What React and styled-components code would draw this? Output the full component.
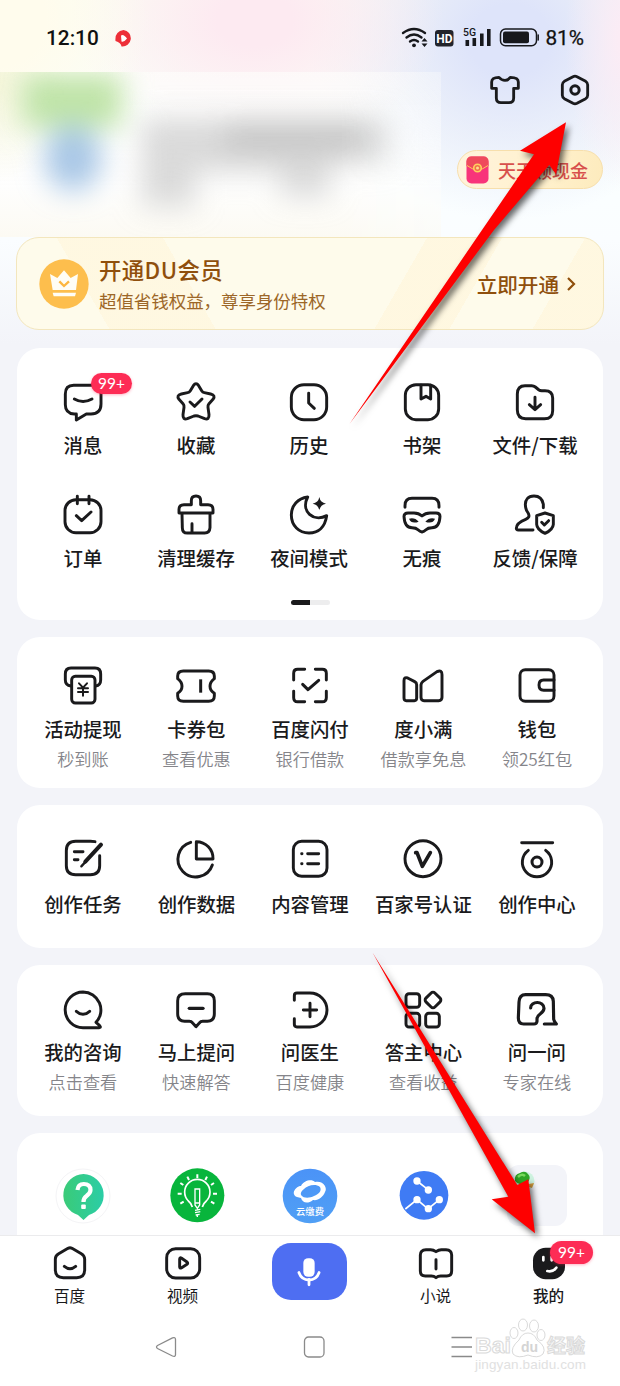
import React from 'react'
import styled, { createGlobalStyle, css } from 'styled-components'

const ink = '#1a1a1c';
const brown = '#8f4f0c';

const GlobalStyle = createGlobalStyle`
  body{
    margin: 0;
    background: #f3f4f9;
    font-family: "Noto Sans CJK SC", sans-serif;
    color: ${ink};
  }
  *{
    box-sizing: border-box;
  }
`;

const Page = styled.div`
  position: relative;
  width: 620px;
  height: 1386px;
  overflow: hidden;
`;
const Content = styled.main`
  height: 1235px;
  overflow: hidden;
  background:
    radial-gradient(ellipse 150px 150px at 0 20px, #fffced 30%, rgba(255,252,237,0) 100%),
    radial-gradient(ellipse 190px 130px at 255px 20px, #fdeaf1 20%, rgba(253,234,241,0) 100%),
    radial-gradient(ellipse 60px 150px at 625px 40px, #fbecf5 10%, rgba(251,236,245,0) 100%),
    radial-gradient(ellipse 200px 180px at 510px 40px, #dee4fa 20%, rgba(222,228,250,0) 100%),
    linear-gradient(#fbfdf4 0, #fafeff 200px, #fafdff 240px, #f3f4f9 345px);
`;

/* status bar */
const StatusBar = styled.div`
  display: flex;
  align-items: center;
  height: 72px;
  padding: 4px 36px 0 46px;
  font: 500 20.8px/24px Roboto, sans-serif;
  color: #111;
`;
const Recording = styled.svg`
  margin: 0 auto 0 16px;
`;
const Signals = styled.svg`
  margin-right: 6px;
`;
const Percent = styled.span`
  font-weight: 400;
  -webkit-text-stroke: .25px #111;
`;

/* profile header */
const Header = styled.header`
  display: flex;
  height: 165px;
`;
const BlurredProfile = styled.div`
  width: 441px;
  overflow: hidden;
  background:
    radial-gradient(ellipse 70px 100px at 0 10px, rgba(244,244,214,.85), rgba(250,250,235,0)),
    linear-gradient(rgba(253,253,251,.6), rgba(254,254,254,.85) 40%, #fefefd 70%, #fcfaf3);
  mask-image: linear-gradient(90deg, #000 340px, rgba(0,0,0,.55));
`;
const HeaderSide = styled.div`
  flex: 1;
  display: flex;
  flex-direction: column;
  align-items: flex-end;
  padding-right: 17px;
`;
const Tools = styled.div`
  display: flex;
  gap: 38px;
  padding: 2px 12px 0 0;
  margin-bottom: 44px;
`;
const CashPill = styled.div`
  display: flex;
  align-items: center;
  gap: 9px;
  width: 146px;
  height: 39px;
  padding-left: 8px;
  border: 1.5px solid #f7dfac;
  border-radius: 20px;
  background: linear-gradient(100deg, #fff3dc, #fff1cd 60%, #fdebbd);
  color: #d8504c;
  font-size: 18px;
  font-weight: 500;
  line-height: 24px;
  white-space: nowrap;
`;

/* membership banner */
const Vip = styled.section`
  display: flex;
  align-items: center;
  height: 93px;
  margin: 0 16px 18px;
  padding: 0 26px 0 22px;
  border: 1px solid #f3e6bd;
  border-radius: 23px;
  background:
    linear-gradient(60deg, transparent 0 80px, rgba(255,246,220,.65) 80px 172px, transparent 172px) no-repeat,
    linear-gradient(120deg, transparent 0 355px, rgba(255,246,220,.7) 355px 420px, transparent 420px 492px, rgba(255,246,220,.7) 492px) no-repeat,
    #fefbeb;
`;
const VipText = styled.div`
  flex: 1;
  margin-left: 10px;
  padding-top: 2px;
  color: ${brown};
  white-space: nowrap;
`;
const VipTitle = styled.div`
  font-size: 22.4px;
  line-height: 32px;
  margin-top: -1px;
  letter-spacing: .4px;
  font-weight: 500;
`;
const VipHint = styled.div`
  font-size: 17.45px;
  line-height: 31px;
  font-weight: 400;
  color: #9c6627;
`;
const VipAction = styled.div`
  display: flex;
  align-items: center;
  gap: 6px;
  color: ${brown};
  font-size: 20.6px;
  line-height: 28px;
  font-weight: 500;
`;

/* white cards */
const Card = styled.section`
  height: ${p => p.$height}px;
  margin: 0 17px 17px;
  padding-top: ${p => p.$top}px;
  border-radius: 23px;
  background: #fff;
`;
const Grid = styled.div`
  display: grid;
  grid-template-columns: repeat(5, ${p => p.$col || 113.5}px);
  justify-content: start;
  row-gap: 36px;
  padding-left: ${p => p.$left || 9.2}px;
`;
const Item = styled.div`
  position: relative;
  display: flex;
  flex-direction: column;
  align-items: center;
  white-space: nowrap;
`;
const Label = styled.div`
  margin-top: ${p => p.$gap}px;
  font-size: 19.4px;
  line-height: 24px;
  font-weight: 500;
`;
const Hint = styled.div`
  margin-top: 8px;
  font-size: 17.2px;
  line-height: 20px;
  font-weight: 350;
  color: #85858a;
`;
const Pager = styled.div`
  width: 39px;
  height: 5px;
  margin: 30px auto 0;
  border-radius: 3px;
  background: linear-gradient(90deg, ${ink} 50%, #ededee 50%);
`;
const Badge = styled.span`
  position: absolute;
  left: ${p => p.$x}px;
  top: ${p => p.$y}px;
  width: ${p => (p.$big ? 43 : 41)}px;
  height: ${p => (p.$big ? 23 : 21)}px;
  border-radius: 12px;
  background: #fd2c55;
  box-shadow: 0 1px 3px rgba(253,44,85,.35);
  color: #fff;
  font: 400 15.5px/${p => (p.$big ? 22 : 21)}px Lato, sans-serif;
  text-align: center;
`;
const Tile = styled.div`
  width: 60px;
  height: 61px;
  border-radius: 12px;
  background: #f3f4f9;
`;

/* bottom bars */
const TabBar = styled.nav`
  display: grid;
  grid-template-columns: 113px 113px 140px 113px 113px;
  height: 77px;
  padding: 5px 0 0 13px;
  border-top: 1px solid #ebebed;
  background: #fff;
`;
const TabLabel = styled.div`
  margin-top: -1px;
  font-size: 15.6px;
  line-height: 22px;
  font-weight: ${p => (p.$active ? 500 : 400)};
`;
const Mic = styled.div`
  display: flex;
  align-items: center;
  justify-content: center;
  width: 75px;
  height: 57px;
  margin-top: 2px;
  border-radius: 19px;
  background: #4e6ef2;
`;
const SystemBar = styled.div`
  display: flex;
  align-items: flex-start;
  height: 74px;
  padding: 24px 0 0 155px;
  background: #fff;
  svg{
    margin-right: 126px;
  }
`;

const overlay = css`
  position: absolute;
  pointer-events: none;
`;
const Arrows = styled.svg`
  ${overlay}
  inset: 0;
  filter: drop-shadow(3px 4px 3px rgba(0,0,0,.6));
`;
const Watermark = styled.svg`
  ${overlay}
  left: 470px;
  top: 1312px;
`;

// icons are drawn on a 3x canvas around the origin
const Icon = ({ children, w = 8.8 }) => (
  <svg width="44" height="44" viewBox="-66 -66 132 132" fill="none" stroke={ink} strokeWidth={w} strokeLinecap="round" strokeLinejoin="round">
    {children}
  </svg>
)

const dot = { fill: ink, stroke: 'none' };

const icons = {
  message: <><path d="M-28-50H28Q54-50 54-24V6Q54 36 24 36H10L-20 54V36H-26Q-53 34-53 8V-24Q-53-50-28-50Z" /><path d="M-26-9Q0 6 27-9" /></>,
  star: <><path d="M-8-49Q0-60 8-49L17-34Q20-29 25-28L44-24Q60-20 51-8L39 5Q35 10 36 16L39 38Q40 54 26 50L6 42Q0 40-6 42L-26 50Q-40 54-39 38L-36 16Q-35 10-39 5L-51-8Q-60-20-44-24L-25-28Q-20-29-17-34Z" /><path d="M-18 0L-4 13L18-9" /></>,
  history: <><rect x="-53" y="-52" width="106" height="105" rx="38" /><path d="M-1-26V3L16 19" /></>,
  shelf: <><rect x="-50" y="-52" width="100" height="105" rx="32" /><path d="M-3-50V-9L12-17L26-9V-50" /></>,
  folder: <><path d="M-30-49H-10Q-4-49 1-45L12-36Q15-34 20-34H30Q53-34 53-12V26Q53 50 28 50H-28Q-53 50-53 24V-24Q-53-49-30-49Z" /><path d="M0-14V22M-17 8L0 23L17 8" /></>,
  order: <><rect x="-54" y="-46" width="108" height="99" rx="33" /><path d="M-17-56V-34M18-56V-34M-20 2L-4 17L24-9" /></>,
  clean: <><path d="M-14-31V-43Q-14-57 0-57Q14-57 14-43V-31H36Q51-31 51-17V-6H-51V-17Q-51-31-36-31Z" /><path d="M-42-4L-41 38Q-41 54-26 54H26Q41 54 42 38L42-4M-12 50V26" /></>,
  night: <><path d="M-4-54C-34-50-53-28-53 0C-53 32-30 54 0 54C28 54 48 36 53 2C14 22-26-10-4-54Z" /><path {...dot} d="M31-54Q34-37 51-34Q34-31 31-14Q28-31 11-34Q28-37 31-54Z" /></>,
  mask: <><path d="M-51-23V-28Q-51-50-30-50H30Q51-50 51-28V-23" /><path d="M-42-6H-24Q-10-6 0 3Q10-6 24-6H42Q54-6 54 4C53 24 46 38 30 38Q18 38 12 44Q6 50 0 51Q-6 50-12 44Q-18 38-30 38C-46 38-53 24-54 4Q-54-6-42-6Z" /><path {...dot} d="M-39 11Q-22 6-10 20Q-32 28-39 11ZM39 11Q22 6 10 20Q32 28 39 11Z" /></>,
  feedback: <><path d="M25-22V-32C22-50 12-57-3-57C-22-57-29-44-29-32C-29-18-26-12-20-5C-16 4-18 9-28 13C-46 20-56 28-56 40Q-56 45-50 45H-6" /><path d="M30-6L55 2V28Q54 44 30 55Q6 44 5 28V2ZM20 22L28 30L41 17" /></>,
  cash: <><path d="M-36 0Q-53-2-53-18V-36Q-53-54-36-54H36Q53-54 53-36V-18Q53-2 38 0" /><rect x="-34" y="-29" width="70" height="80" rx="11" /><path strokeWidth="6" d="M-12-8L0 5L12-8M0 5V29M-15 7H15M-15 18H15" /></>,
  ticket: <><path d="M-38-45H38Q55-45 55-30V-22Q42-12 42 1Q42 14 55 22V30Q55 46 38 46H-38Q-55 46-55 30V22Q-42 14-42 1Q-42-12-55-22V-30Q-55-45-38-45Z" /><path strokeWidth="9" strokeLinecap="butt" d="M14-20V20" /></>,
  scan: <><path d="M-16-50H-37Q-49-50-49-38V-18M16-50H37Q49-50 49-38V-18M-16 47H-37Q-49 47-49 35V16M16 47H37Q49 47 49 35V16" /><path strokeWidth="9" d="M-22-5L-6 11L26-17" /></>,
  duxiaoman: <><path d="M-57-16Q-57-28-46-24L-25-13Q-19-10-19-4V36Q-19 44-26 44H-50Q-57 44-57 36Z" /><path d="M-6-4Q-5-10 0-14L42-43Q57-50 57-34V34Q57 44 47 44H3Q-6 44-6 34Z" /></>,
  wallet: <><rect x="-51" y="-49" width="102" height="95" rx="16" /><path d="M51-18H20Q6-18 6-3Q6 13 20 13H51" /></>,
  task: <><path d="M36-52Q30-53 22-53H-22Q-50-53-50-25V20Q-50 47-22 47H22Q50 47 50 20V-10" /><path strokeWidth="12" d="M54-43L7 8" /><path strokeWidth="7" d="M8 8L-5 22" /><path d="M-26-22H0M-26 2H-15" /></>,
  pie: <><path d="M-16-50A53 53 0 1 0 49 18" /><path d="M1-52V0H51A50 50 0 0 0 1-52Z" /></>,
  list: <><rect x="-50" y="-53" width="101" height="105" rx="25" /><path d="M-7-16H26M-7 14H26M-25-16H-24M-25 14H-24" /></>,
  verify: <><circle cy="-1" r="54" /><path strokeWidth="11" d="M-22-19H-18L-2 22L22-19" /></>,
  creator: <><path d="M-46-49H47M-26-26A44 44 0 1 0 26-26" /><circle cy="9" r="15" strokeWidth="9" /></>,
  consult: <><path d="M0-54A53.500 53.500 0 0 0 0 53H49Q55 52 50 47L39 37A54 54 0 0 0 0-54Z" /><path d="M-20 4Q0 22 20 4" /></>,
  ask: <><path d="M-32-49H34Q55-49 55-28V12Q55 33 34 34H20Q14 34 10 39L0 50L-10 39Q-14 34-20 34H-34Q-55 33-55 12V-28Q-55-49-32-49Z" /><path strokeWidth="10" d="M-20-5H21" /></>,
  doctor: <><path d="M-47-29V-43Q-47-51-39-51H0A51 51 0 0 1 0 51H-39Q-47 51-47 43V26" /><path d="M-20 0H20M0-20V20" /></>,
  answer: <><rect x="-51" y="-49" width="41" height="41" rx="9" /><rect x="-51" y="10" width="41" height="41" rx="9" /><rect x="8" y="10" width="41" height="41" rx="9" /><rect x="11" y="-49" width="38" height="38" rx="8" transform="rotate(45 30 -30)" /></>,
  question: <path strokeWidth="9.500" d="M-19-6C-20-27 21-29 21-5C20 12 1 10 0 26V34Q-1 42-9 42H-40Q-56 42-56 24L-54-24Q-53-46-34-46H26Q48-46 49-26L50 28Q51 34 58 42H22" />,
};

const first = [
  ['message', '消息'], ['star', '收藏'], ['history', '历史'], ['shelf', '书架'], ['folder', '文件/下载'],
  ['order', '订单'], ['clean', '清理缓存'], ['night', '夜间模式'], ['mask', '无痕'], ['feedback', '反馈/保障'],
];
const money = [
  ['cash', '活动提现', '秒到账'], ['ticket', '卡券包', '查看优惠'], ['scan', '百度闪付', '银行借款'],
  ['duxiaoman', '度小满', '借款享免息'], ['wallet', '钱包', '领25红包'],
];
const create = [
  ['task', '创作任务'], ['pie', '创作数据'], ['list', '内容管理'], ['verify', '百家号认证'], ['creator', '创作中心'],
];
const qa = [
  ['consult', '我的咨询', '点击查看'], ['ask', '马上提问', '快速解答'], ['doctor', '问医生', '百度健康'],
  ['answer', '答主中心', '查看收益'], ['question', '问一问', '专家在线'],
];

const renderItems = (list, gap) => list.map(([icon, label, hint]) => (
  <Item key={label}>
    <Icon>{icons[icon]}</Icon>
    {icon === 'message' && <Badge $x={64.5} $y={-7}>99+</Badge>}
    <Label $gap={gap}>{label}</Label>
    {hint && <Hint>{hint}</Hint>}
  </Item>
))

const StatusIcons = () => (
  <Signals width="138" height="26" viewBox="0 -2 138 26" fill="none" stroke="#17181c" strokeLinecap="round">
    <path strokeWidth="2.300" d="M2 6Q13-2 24 6M5.500 10.500Q13 4.500 20.500 10.500M9 14.500Q13 11.500 17 14.500" />
    <circle cx="13" cy="18.300" r="1.900" fill="#17181c" stroke="none" />
    <path d="M20.500 14.500L23.500 11L26.500 14.500ZM20.500 16.500L23.500 20L26.500 16.500Z" fill="#17181c" stroke="none" />
    <rect x="34" y="3" width="18.500" height="16.500" rx="3" fill="#22242b" stroke="none" />
    <text x="43.300" y="15.800" textAnchor="middle" fontFamily="Roboto" fontWeight="700" fontSize="12" fill="#fff" stroke="none">HD</text>
    <text x="62" y="9" fontFamily="Roboto" fontWeight="500" fontSize="11.500" textLength="13" lengthAdjust="spacingAndGlyphs" fill="#17181c" stroke="none">5G</text>
    <path strokeWidth="3.600" strokeLinecap="butt" d="M66.300 13V19M73.300 11V19M80.800 6.500V19M87.800 2V19" />
    <rect x="99.500" y="2" width="36" height="16.800" rx="5" strokeWidth="1.500" />
    <rect x="102" y="4.500" width="26" height="11.800" rx="2" fill="#17181c" stroke="none" />
    <path strokeWidth="1.500" d="M137.200 8V13" />
  </Signals>
)

const tabs = {
  home: <><path d="M-6-44Q0-47 6-44L34-28Q44-22 44-12V20Q44 44 20 44H-20Q-44 44-44 20V-12Q-44-22-34-28Z" /><path d="M-17 10Q0 24 17 10" /></>,
  video: <><rect x="-49" y="-43" width="99" height="88" rx="27" /><path d="M-10-12Q-10-18-4-14L12-3Q16 1 12 4L-4 14Q-10 17-10 12Z" /></>,
  novel: <><path d="M0-34Q-8-40-16-40H-30Q-47-39-47-24V24Q-47 39-32 39H-14Q-6 39 0 44Q6 39 14 39H32Q47 39 47 24V-24Q47-39 30-40H16Q8-40 0-34Z" /><path d="M0-10V18" /></>,
  mine: <><rect x="-48" y="-46" width="96" height="95" rx="38" {...dot} /><path stroke="#fff" strokeWidth="8" d="M-17-18V-8M8-18V-8M-5 24Q12 28 22 14" /></>,
};

const App = () => {
  return (
    <Page>
      <GlobalStyle />
      <Content>
        <StatusBar>
          12:10
          <Recording width="17" height="17" viewBox="0 0 17 17">
            <path d="M8.500 0A8.300 8.300 0 1 1 6.500 16.500Q6 12.500.5 11Q-.5 1.500 8.500 0Z" fill="#ed2f38" />
            <path d="M6 5.500Q8.500 3.500 12 8.500Q9 12.500 6.500 11.500Z" fill="#fff" />
          </Recording>
          <StatusIcons />
          <Percent>81%</Percent>
        </StatusBar>
        <Header>
          <BlurredProfile>
            <svg width="441" height="165" viewBox="0 0 441 165">
              <defs>
                <filter id="soft" x="-100%" y="-100%" width="300%" height="300%"><feGaussianBlur stdDeviation="14" /></filter>
              </defs>
              <g filter="url(#soft)">
                <rect x="22" y="2" width="100" height="54" fill="#c0e4a8" />
                <ellipse cx="73" cy="86" rx="29" ry="33" fill="#a9c7e6" />
                <path d="M142 46H390V92H330V124H280V100H195V134H142Z" fill="#cccccc" opacity=".72" />
                <rect x="225" y="50" width="145" height="30" fill="#b6b6b6" opacity=".5" />
              </g>
            </svg>
          </BlurredProfile>
          <HeaderSide>
            <Tools>
              <svg width="32" height="32" viewBox="-48 -48 96 96" fill="none" stroke={ink} strokeWidth="8.500" strokeLinejoin="round">
                <path d="M-18-38Q-10-29 0-29Q10-29 16-38Q40-38 40-24V-5H26V24Q26 38 12 38H-12Q-26 38-26 24V-5H-40V-24Q-40-38-18-38Z" />
              </svg>
              <svg width="32" height="32" viewBox="-48 -48 96 96" fill="none" stroke={ink} strokeWidth="8.500" strokeLinejoin="round">
                <path d="M-6-40Q0-43 6-40L32-26Q38-22 38-16V16Q38 22 32 26L6 40Q0 43-6 40L-32 26Q-38 22-38 16V-16Q-38-22-32-26Z" />
                <circle r="12.500" strokeWidth="9" />
              </svg>
            </Tools>
            <CashPill>
              <svg width="23" height="28" viewBox="0 0 23 28">
                <rect x=".5" y=".5" width="22" height="27" rx="5" fill="#f8347a" />
                <path d="M.5 10V6Q.5.5 5.500.5H17.500Q22.500.5 22.500 6V10Q11.500 18 .5 10Z" fill="#ef4a5c" />
                <path d="M1 9.500Q11.500 18 22 9.500" fill="none" stroke="#ffc35c" />
                <circle cx="11.500" cy="12" r="3.800" fill="#f0714a" stroke="#ffd060" strokeWidth="1.600" />
                <circle cx="11.500" cy="12" r="1.500" fill="#ffe08a" />
              </svg>
              天天领现金
            </CashPill>
          </HeaderSide>
        </Header>

        <Vip>
          <svg width="50" height="50" viewBox="-75 -75 150 150">
            <circle r="74" fill="#fdbe4d" />
            <path d="M-42-30L-20-18L0-41L20-18L42-30L36 18H-34Z" fill="#fffdf6" />
            <path d="M-34 26H36L33 37H-31Z" fill="#fffdf6" />
            <path d="M-14-8L0 6L15-8" fill="none" stroke="#fdb640" strokeWidth="7" />
          </svg>
          <VipText>
            <VipTitle>开通DU会员</VipTitle>
            <VipHint>超值省钱权益，尊享身份特权</VipHint>
          </VipText>
          <VipAction>
            立即开通
            <svg width="12" height="16" viewBox="0 0 12 16" fill="none" stroke={brown} strokeWidth="2.200"><path d="M3 2L9 8L3 14" /></svg>
          </VipAction>
        </Vip>

        <Card $height={272} $top={32}>
          <Grid $col={113} $left={9.5}>{renderItems(first, 9)}</Grid>
          <Pager />
        </Card>
        <Card $height={151} $top={27}>
          <Grid>{renderItems(money, 9)}</Grid>
        </Card>
        <Card $height={143} $top={32}>
          <Grid>{renderItems(create, 11)}</Grid>
        </Card>
        <Card $height={151} $top={23}>
          <Grid>{renderItems(qa, 8)}</Grid>
        </Card>
        <Card $height={140} $top={32}>
          <Grid $left={9.5}>
            <Item>
              <svg width="60" height="61" viewBox="-30 -30 60 61">
                <defs>
                  <linearGradient id="mint"><stop stopColor="#3acb78" /><stop offset="1" stopColor="#2bcda6" /></linearGradient>
                </defs>
                <circle r="27" cy="1" fill="#fff" stroke="#f4f4f6" />
                <path d="M.5-21A21 21 0 0 1 6 20L.5 25L-5 20A21 21 0 0 1 .5-21Z" fill="url(#mint)" />
                <path d="M-5.500-5Q-5-11 .8-11Q7.500-11 7.500-5Q7.500-2 3.500 1Q.5 3 .5 7" fill="none" stroke="#fff" strokeWidth="4.200" />
                <rect x="-1.800" y="9.500" width="4.600" height="4.400" rx="1" fill="#fff" />
              </svg>
            </Item>
            <Item>
              <svg width="60" height="61" viewBox="-90 -90 180 183" fill="none" stroke="#fff" strokeWidth="5">
                <circle r="81" cy="1" cx="1" fill="#08b53c" stroke="none" />
                <path d="M-14 36Q-16 26-26 18A38 38 0 1 1 28 18Q18 26 16 36" />
                <path strokeWidth="4" d="M-6 30V-18H8V30L1 40ZM-6 24H8M-6 46L10 43M-6 53L10 50M-4 60L8 58M1 60V66" />
                <path strokeWidth="6" d="M1-62V-51M-29-55L-24-45M30-55L25-45M-50-36L-41-30M51-36L42-30M-58-4H-46M60-4H48M-50 26L-40 20M52 26L42 20" />
              </svg>
            </Item>
            <Item>
              <svg width="60" height="61" viewBox="-30 -30 60 61">
                <defs>
                  <linearGradient id="sky" x1="0" y1="0" x2="0" y2="1"><stop stopColor="#4b93f7" /><stop offset="1" stopColor="#509ff5" /></linearGradient>
                </defs>
                <circle r="27.300" cy="1" fill="url(#sky)" />
                <path d="M-13 2C-20-1-14-9-9-9C-6-15 2-16 5-13C13-15 18-7 15-3C13 2 8 6 3 5C-3 10-8 7-9 3ZM-9 0C-6 4 0 3 4 1C9-1 12-4 10-8C5-12-3-9-6-6Q-10-3-9 0Z" fill="#fff" fillRule="evenodd" />
                <text y="19.500" textAnchor="middle" fontSize="9.300" fontWeight="500" fill="#fff">云缴费</text>
              </svg>
            </Item>
            <Item>
              <svg width="60" height="61" viewBox="-90 -90 180 183" fill="none" stroke="#fff" strokeWidth="5">
                <circle r="73" cy="1" fill="#3f7bf4" stroke="none" />
                <path d="M-21-42L12-16M-56 42L-21 14L12 42L46 14" />
                <g fill="#fff" stroke="none"><circle cx="-21" cy="-42" r="11" /><circle cx="13" cy="-15" r="11" /><circle cx="-21" cy="14" r="11" /><circle cx="13" cy="41" r="11" /><circle cx="46" cy="14" r="11" /></g>
              </svg>
            </Item>
            <Item>
              <Tile>
                <svg width="34" height="32" viewBox="0 0 34 32">
                  <circle cx="18" cy="16" r="9.500" fill="#cdf2df" />
                  <path d="M8 16Q7 9 13 8Q18 5 21 9Q25 13 20 18Q12 21 8 16Z" fill="#2fa626" />
                  <path d="M11 12Q15 8 18 11" fill="none" stroke="#78d95c" strokeWidth="2.500" />
                  <path d="M17 20L25 23L27 18Z" fill="#d59a3c" />
                </svg>
              </Tile>
            </Item>
          </Grid>
        </Card>
      </Content>

      <TabBar>
        <Item><Icon>{tabs.home}</Icon><TabLabel>百度</TabLabel></Item>
        <Item><Icon>{tabs.video}</Icon><TabLabel>视频</TabLabel></Item>
        <Item>
          <Mic>
            <svg width="28" height="32" viewBox="0 0 26 30" fill="none" stroke="#fff" strokeWidth="2.600" strokeLinecap="round">
              <rect x="7.700" y="2" width="10.600" height="17.500" rx="4.500" fill="#fff" stroke="none" />
              <path d="M3.500 15.500Q6 22.500 13 22.500Q20 22.500 22.500 15.500M13 22V27" />
            </svg>
          </Mic>
        </Item>
        <Item><Icon>{tabs.novel}</Icon><TabLabel>小说</TabLabel></Item>
        <Item>
          <Icon>{tabs.mine}</Icon>
          <Badge $x={58} $y={0} $big>99+</Badge>
          <TabLabel $active>我的</TabLabel>
        </Item>
      </TabBar>
      <SystemBar>
        <svg width="22" height="22" viewBox="0 0 22 22" fill="none" stroke="#8a8a8a" strokeWidth="1.300"><path d="M2.500 9.500L17.500 1.800Q20.500.8 20.500 3.500V18.500Q20.500 21.200 17.500 20L2.500 12.500Q.5 11 2.500 9.500Z" /></svg>
        <svg width="22" height="22" viewBox="0 0 22 22" fill="none" stroke="#8a8a8a" strokeWidth="1.300"><rect x="1.500" y="1" width="19.500" height="20" rx="4" /></svg>
        <svg width="22" height="22" viewBox="0 0 22 22" fill="none" stroke="#8a8a8a" strokeWidth="1.300"><path d="M.5 1.500H21M.5 11H21M.5 20.500H21" /></svg>
      </SystemBar>

      <Watermark width="130" height="66" viewBox="0 0 130 66" fill="#fff" stroke="#dadada" strokeWidth="1">
        <text x="5" y="41" fontFamily="Liberation Sans" fontWeight="700" fontSize="22" textLength="36" lengthAdjust="spacingAndGlyphs">Bai</text>
        <ellipse cx="44" cy="21" rx="4" ry="5.500" />
        <ellipse cx="53" cy="13" rx="4.500" ry="6" />
        <ellipse cx="64" cy="14" rx="4.500" ry="6" />
        <ellipse cx="71" cy="23" rx="4" ry="5.500" />
        <path d="M58 21Q64 21 67 28Q77 35 73 42Q68 47 58 43Q48 47 43 42Q40 36 49 28Q52 21 58 21Z" />
        <text x="51" y="40" fontFamily="Liberation Sans" fontWeight="700" fontSize="14" fill="#d4d4d4" stroke="none">du</text>
        <text x="77" y="41" fontSize="19" fontWeight="700" fill="#f6f6f6">经验</text>
        <text x="5" y="57" fontFamily="Liberation Sans" fontSize="13.500" fill="#e1e1e1" stroke="none" textLength="111">jingyan.baidu.com</text>
      </Watermark>
      <Arrows width="620" height="1386" viewBox="0 0 620 1386" fill="#fe0000">
        <path d="M349.500 424L482 230L534 154.300L520 150.700L566 122.300L556 174.300L549.300 165L494 230Z" />
        <path d="M372.500 952.500L508.300 1196.700L491.700 1199.300L535 1233.300L528.300 1179.300L517.300 1185Z" />
      </Arrows>
    </Page>
  )
}

export default App
